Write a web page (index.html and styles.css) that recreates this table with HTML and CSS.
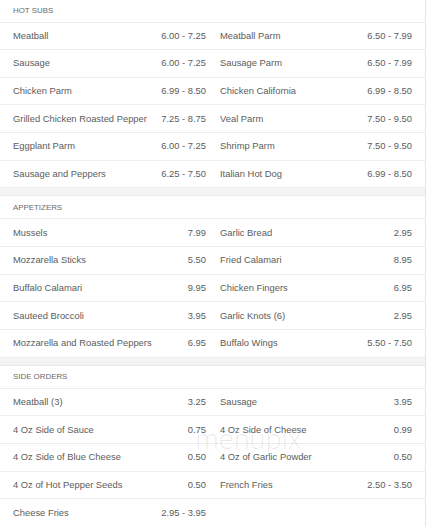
FILE: index.html
```html
<!DOCTYPE html>
<html>
<head>
<meta charset="utf-8">
<link rel="stylesheet" href="styles.css">
</head>
<body>
<div class="menu">
  <section class="sec first">
    <div class="head">Hot Subs</div>
    <div class="grid">
      <div class="item"><span>Meatball</span><span>6.00 - 7.25</span></div>
      <div class="item"><span>Meatball Parm</span><span>6.50 - 7.99</span></div>
      <div class="item"><span>Sausage</span><span>6.00 - 7.25</span></div>
      <div class="item"><span>Sausage Parm</span><span>6.50 - 7.99</span></div>
      <div class="item"><span>Chicken Parm</span><span>6.99 - 8.50</span></div>
      <div class="item"><span>Chicken California</span><span>6.99 - 8.50</span></div>
      <div class="item"><span>Grilled Chicken Roasted Pepper</span><span>7.25 - 8.75</span></div>
      <div class="item"><span>Veal Parm</span><span>7.50 - 9.50</span></div>
      <div class="item"><span>Eggplant Parm</span><span>6.00 - 7.25</span></div>
      <div class="item"><span>Shrimp Parm</span><span>7.50 - 9.50</span></div>
      <div class="item"><span>Sausage and Peppers</span><span>6.25 - 7.50</span></div>
      <div class="item"><span>Italian Hot Dog</span><span>6.99 - 8.50</span></div>
    </div>
  </section>
  <div class="band"></div>
  <section class="sec">
    <div class="head">Appetizers</div>
    <div class="grid">
      <div class="item"><span>Mussels</span><span>7.99</span></div>
      <div class="item"><span>Garlic Bread</span><span>2.95</span></div>
      <div class="item"><span>Mozzarella Sticks</span><span>5.50</span></div>
      <div class="item"><span>Fried Calamari</span><span>8.95</span></div>
      <div class="item"><span>Buffalo Calamari</span><span>9.95</span></div>
      <div class="item"><span>Chicken Fingers</span><span>6.95</span></div>
      <div class="item"><span>Sauteed Broccoli</span><span>3.95</span></div>
      <div class="item"><span>Garlic Knots (6)</span><span>2.95</span></div>
      <div class="item"><span>Mozzarella and Roasted Peppers</span><span>6.95</span></div>
      <div class="item"><span>Buffalo Wings</span><span>5.50 - 7.50</span></div>
    </div>
  </section>
  <div class="band"></div>
  <section class="sec">
    <div class="head">Side Orders</div>
    <div class="grid">
      <div class="item"><span>Meatball (3)</span><span>3.25</span></div>
      <div class="item"><span>Sausage</span><span>3.95</span></div>
      <div class="item"><span>4 Oz Side of Sauce</span><span>0.75</span></div>
      <div class="item"><span>4 Oz Side of Cheese</span><span>0.99</span></div>
      <div class="item"><span>4 Oz Side of Blue Cheese</span><span>0.50</span></div>
      <div class="item"><span>4 Oz of Garlic Powder</span><span>0.50</span></div>
      <div class="item"><span>4 Oz of Hot Pepper Seeds</span><span>0.50</span></div>
      <div class="item"><span>French Fries</span><span>2.50 - 3.50</span></div>
      <div class="item last"><span>Cheese Fries</span><span>2.95 - 3.95</span></div>
    </div>
    <div class="watermark">menupix</div>
  </section>
</div>
</body>
</html>
```

FILE: styles.css
```css
html, body {
  margin: 0;
  padding: 0;
  background: #ffffff;
}

body {
  font-family: "Liberation Sans", Arial, sans-serif;
  color: #5c5c5c;
  overflow: hidden;
}

.menu {
  width: 425px;
  border-right: 1px solid #e4e4e4;
  box-sizing: content-box;
  height: 526px;
  overflow: hidden;
}

.sec {
  position: relative;
}

.head {
  height: 23px;
  box-sizing: border-box;
  padding: 0 13px;
  display: flex;
  align-items: center;
  font-size: 7.9px;
  text-transform: uppercase;
  color: #6a6a6a;
  border-bottom: 1px solid #ececec;
}

.first .head {
  height: 22.5px;
  padding-bottom: 1px;
}

.grid {
  display: grid;
  grid-template-columns: 213px 212px;
}

.item {
  height: 27.67px;
  box-sizing: border-box;
  display: flex;
  justify-content: space-between;
  align-items: center;
  padding: 0 7px 1px 13px;
  font-size: 9.4px;
  color: #5c5c5c;
  border-bottom: 1px solid #ececec;
}

.item:nth-child(2n) {
  padding: 0 13px 1px 7px;
}

.item.last {
  border-bottom: none;
}

.band {
  height: 8px;
  background: #f4f4f4;
  border-bottom: 1px solid #eaeaea;
  box-sizing: border-box;
}

.watermark {
  position: absolute;
  left: 195px;
  top: 54px;
  font-family: "Open Sans", "Liberation Sans", sans-serif;
  font-weight: 300;
  font-size: 27px;
  color: rgba(0, 0, 0, 0.09);
  pointer-events: none;
}
```
